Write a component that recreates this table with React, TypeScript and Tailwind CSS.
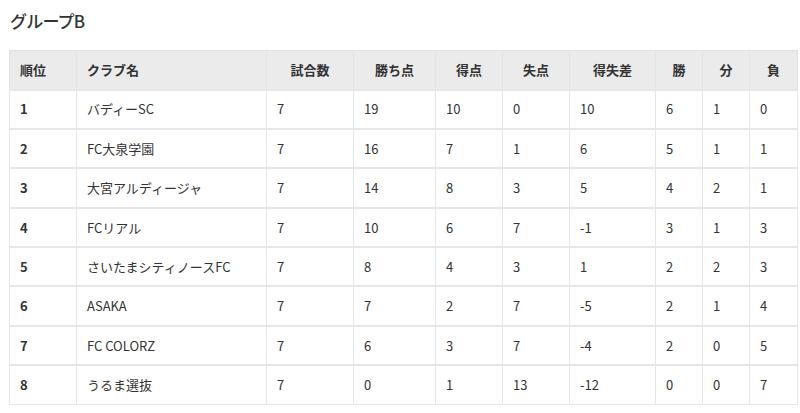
import React from "react";

const rows: (string | number)[][] = [
  [1, "バディーSC", 7, 19, 10, 0, 10, 6, 1, 0],
  [2, "FC大泉学園", 7, 16, 7, 1, 6, 5, 1, 1],
  [3, "大宮アルディージャ", 7, 14, 8, 3, 5, 4, 2, 1],
  [4, "FCリアル", 7, 10, 6, 7, -1, 3, 1, 3],
  [5, "さいたまシティノースFC", 7, 8, 4, 3, 1, 2, 2, 3],
  [6, "ASAKA", 7, 7, 2, 7, -5, 2, 1, 4],
  [7, "FC COLORZ", 7, 6, 3, 7, -4, 2, 0, 5],
  [8, "うるま選抜", 7, 0, 1, 13, -12, 0, 0, 7],
];

const headers = ["順位", "クラブ名", "試合数", "勝ち点", "得点", "失点", "得失差", "勝", "分", "負"];
const widths = [67, 190, 87, 82, 67, 67, 86, 47, 47, 48];

export default function App() {
  return (
    <div
      className="bg-white w-[800px] h-[413px] px-[9px] pt-[8px] text-[#333]"
      style={{ fontFamily: '"Noto Sans CJK JP", "Noto Sans", sans-serif' }}
    >
      <h2 className="text-[17px] font-medium leading-[25px] pl-[1px] mb-[17px] tracking-[-0.8px]">グループB</h2>
      <table className="w-[788px] table-fixed border-collapse text-[13px]">
        <colgroup>
          {widths.map((w, i) => (
            <col key={i} style={{ width: w }} />
          ))}
        </colgroup>
        <thead>
          <tr className="bg-[#ebebec]">
            {headers.map((h, i) => (
              <th
                key={i}
                className={`h-[39px] border border-[#e2e3e7] px-[10px] font-bold ${i < 2 ? "text-left" : "text-center"}`}
              >
                {h}
              </th>
            ))}
          </tr>
        </thead>
        <tbody>
          {rows.map((r, ri) => (
            <tr key={ri} className="border-t-2 border-[#e6e7eb]">
              {r.map((c, ci) => (
                <td
                  key={ci}
                  className={`h-[39.4px] border-x border-b border-[#e6e7eb] px-[10px] text-left ${ci === 0 ? "font-bold" : "font-normal"}`}
                >
                  {c}
                </td>
              ))}
            </tr>
          ))}
        </tbody>
      </table>
    </div>
  );
}
